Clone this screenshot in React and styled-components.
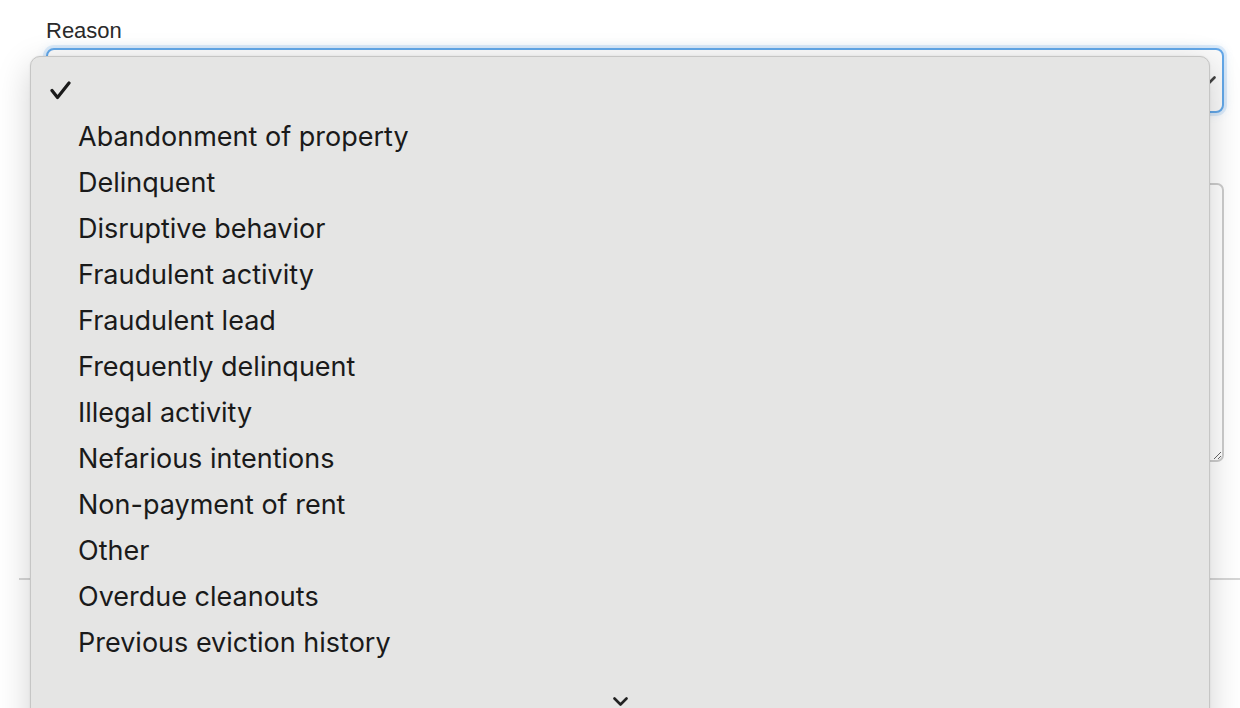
import styled, { createGlobalStyle } from "styled-components";

const GlobalStyle = createGlobalStyle`
  html, body {
    margin: 0;
    padding: 0;
    background: #ffffff;
    overflow: hidden;
  }
`;

const reasons = [
  "Abandonment of property",
  "Delinquent",
  "Disruptive behavior",
  "Fraudulent activity",
  "Fraudulent lead",
  "Frequently delinquent",
  "Illegal activity",
  "Nefarious intentions",
  "Non-payment of rent",
  "Other",
  "Overdue cleanouts",
  "Previous eviction history",
];

const Page = styled.div`
  position: relative;
  height: 708px;
  overflow: hidden;
  padding: 19px 0 0 19px;
  box-sizing: border-box;
  font-family: "Liberation Sans", Arial, sans-serif;
  color: #222;
`;

const Form = styled.div`
  display: flex;
  flex-direction: column;
  padding: 0 16px 0 27px;
`;

const Label = styled.label`
  font-size: 22px;
  line-height: 24px;
  color: #2a2a2a;
  margin-bottom: 5px;
`;

const SelectBox = styled.div`
  position: relative;
  height: 65px;
  box-sizing: border-box;
  border: 2px solid #62a7e8;
  border-radius: 8px;
  background: #fafafa;
  box-shadow: 0 0 0 3px rgba(98, 167, 232, 0.18), 0 0 10px rgba(98, 167, 232, 0.25);
  display: flex;
  align-items: center;
  justify-content: flex-end;
  padding-right: 6px;
`;

const TextArea = styled.textarea`
  margin-top: 70px;
  height: 279px;
  box-sizing: border-box;
  border: 2px solid #cdcdcd;
  border-radius: 7px;
  background: #fff;
  resize: vertical;
  font-family: inherit;
`;

const Divider = styled.hr`
  margin: 116px 0 0;
  border: 0;
  border-top: 2px solid #d6d6d6;
`;

const Menu = styled.div`
  position: absolute;
  left: 30px;
  top: 56px;
  width: 1180px;
  height: 680px;
  box-sizing: border-box;
  background: #e5e5e4;
  border: 1px solid #c6c6c5;
  border-radius: 10px;
  box-shadow: 0 10px 34px rgba(0, 0, 0, 0.18), 0 0 2px rgba(0, 0, 0, 0.1);
  padding-top: 10px;
  display: flex;
  flex-direction: column;
  overflow: hidden;
  font-family: Inter, "Noto Sans", sans-serif;
`;

const List = styled.div`
  height: 612px;
  overflow: hidden;
  flex-shrink: 0;
`;

const Item = styled.div`
  height: 46px;
  display: flex;
  align-items: center;
  padding-left: 47px;
  font-size: 27px;
  color: #1a1a1a;
`;

const CheckRow = styled.div`
  height: 46px;
  display: flex;
  align-items: center;
  padding-left: 19px;
`;

const ScrollStrip = styled.div`
  display: flex;
  justify-content: center;
  padding-top: 18px;
`;

const Chevron = ({ color = "#222" }) => (
  <svg width="15" height="10" viewBox="0 0 15 10" fill="none">
    <path d="M1.5 1.5 L7.5 7.5 L13.5 1.5" stroke={color} strokeWidth="2.6" strokeLinecap="round" strokeLinejoin="round" />
  </svg>
);

const Check = () => (
  <svg width="21" height="19" viewBox="0 0 21 19" fill="none">
    <path d="M2 9.5 L7.5 16.5 L19 2" stroke="#1a1a1a" strokeWidth="3.2" strokeLinecap="round" strokeLinejoin="round" />
  </svg>
);

export default function App() {
  return (
    <>
      <GlobalStyle />
      <Page>
        <Form>
          <Label>Reason</Label>
          <SelectBox>
            <Chevron color="#444" />
          </SelectBox>
          <TextArea />
        </Form>
        <Divider />
        <Menu>
          <List>
            <CheckRow>
              <Check />
            </CheckRow>
            {reasons.map((r) => (
              <Item key={r}>{r}</Item>
            ))}
          </List>
          <ScrollStrip>
            <Chevron />
          </ScrollStrip>
        </Menu>
      </Page>
    </>
  );
}
